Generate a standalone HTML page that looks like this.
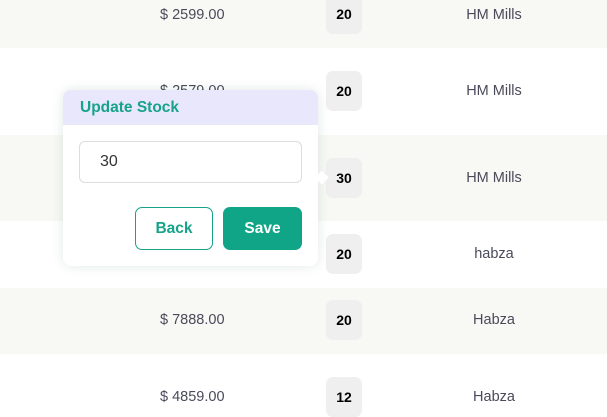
<!DOCTYPE html>
<html><head><style>
body{margin:0;width:607px;height:412px;overflow:hidden;font-family:"Liberation Sans",Arial,sans-serif;background:#fff;position:relative}
.row{position:absolute;left:0;width:607px}
.s{background:#f8f8f4}
.p{position:absolute;left:160px;font-size:14.5px;color:#4a4a5a}
.b{position:absolute;left:326px;width:36px;height:40px;background:#efefef;border-radius:7px;font-weight:bold;font-size:14px;color:#000;display:flex;align-items:center;justify-content:center}
.n{position:absolute;left:434px;width:120px;text-align:center;font-size:14.5px;color:#4a4a5a}
.pop{position:absolute;left:63px;top:90px;width:255px;height:176px;background:#fff;border-radius:8px;box-shadow:0 0 12px rgba(0,80,60,0.12);overflow:visible}
.hd{height:35px;background:#e9e7fc;border-radius:8px 8px 0 0;color:#16a38a;font-weight:bold;font-size:15.5px;line-height:36px;padding-left:17px}
.inp{position:absolute;left:16px;top:51px;width:221px;height:40px;border:1px solid #ddd;border-radius:6px;font-size:16px;color:#333;line-height:40px;text-indent:20px}
.btn{position:absolute;top:117px;height:43px;border-radius:7px;font-weight:bold;font-size:15.5px;display:flex;align-items:center;justify-content:center;box-sizing:border-box}
.arr{position:absolute;left:254px;top:82px;width:10px;height:10px;background:#fff;transform:rotate(45deg);border-right:1px solid #eee;border-top:1px solid #eee}
</style></head><body>
<div class="row s" style="top:0;height:48px"></div>
<div class="row" style="top:48px;height:87px"></div>
<div class="row s" style="top:135px;height:86px"></div>
<div class="row" style="top:221px;height:67px"></div>
<div class="row s" style="top:288px;height:66px"></div>

<div class="p" style="top:7px">$ 2599.00</div>
<div class="p" style="top:83px">$ 2579.00</div>
<div class="p" style="top:312px">$ 7888.00</div>
<div class="p" style="top:389px">$ 4859.00</div>

<div class="b" style="top:-6px">20</div>
<div class="b" style="top:71px">20</div>
<div class="b" style="top:158px">30</div>
<div class="b" style="top:234px">20</div>
<div class="b" style="top:300px">20</div>
<div class="b" style="top:377px">12</div>

<div class="n" style="top:7px">HM Mills</div>
<div class="n" style="top:83px">HM Mills</div>
<div class="n" style="top:170px">HM Mills</div>
<div class="n" style="top:246px">habza</div>
<div class="n" style="top:312px">Habza</div>
<div class="n" style="top:389px">Habza</div>

<div class="pop">
<div class="arr"></div>
<div class="hd">Update Stock</div>
<div class="inp">30</div>
<div class="btn" style="left:72px;width:78px;border:1px solid #16a38a;color:#16a38a;background:#fff">Back</div>
<div class="btn" style="left:160px;width:79px;background:#10a587;color:#fff">Save</div>
</div>
</body></html>
